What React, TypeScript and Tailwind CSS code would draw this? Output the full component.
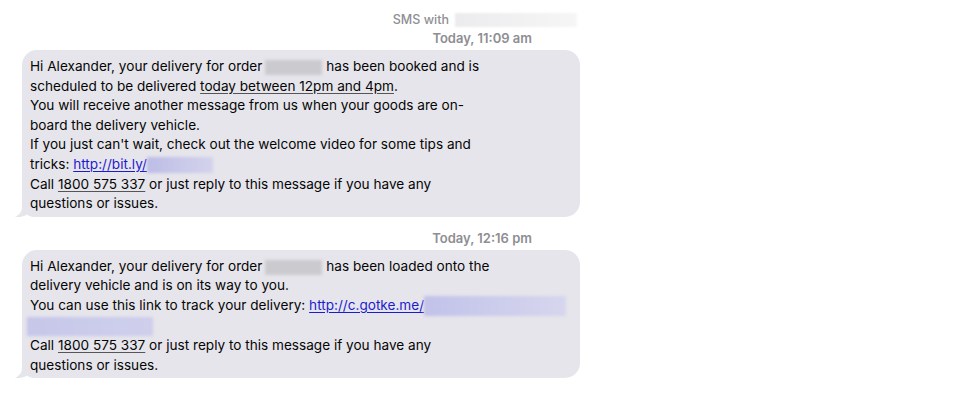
import React from "react";

const font = { fontFamily: "Inter, 'Liberation Sans', Arial, sans-serif" };

function Blur({ className }: { className: string }) {
  return <span className={`inline-block align-middle blur-[1.5px] ${className}`} />;
}

function Tail() {
  return (
    <svg
      className="absolute -left-[7px] bottom-0"
      width="24"
      height="20"
      viewBox="0 0 24 20"
    >
      <path
        d="M7 0 H24 V20 H19 C16 20 14 19 12 17.5 C9 19.5 4 20.5 0 20 C4 18 7 15 7 10 Z"
        fill="#e6e5eb"
      />
    </svg>
  );
}

function Bubble({ children }: { children: React.ReactNode }) {
  return (
    <div className="relative w-[558px] rounded-[15px] bg-[#e6e5eb] pl-[8px] pr-2 pt-[7px] pb-[3px] text-[13.6px] leading-[19.6px] text-[#050505]">
      <Tail />
      <div className="relative">{children}</div>
    </div>
  );
}

function Stamp({ children }: { children: React.ReactNode }) {
  return (
    <div className="flex w-[558px] justify-end pr-[48px] text-[13px] font-semibold leading-[18px] text-[#8e8e93]">
      {children}
    </div>
  );
}

const Link = ({ children }: { children: React.ReactNode }) => (
  <span className="text-[#1c1ccf] underline underline-offset-2">{children}</span>
);

const Detected = ({ children }: { children: React.ReactNode }) => (
  <span className="underline decoration-[#555] underline-offset-2">{children}</span>
);

export default function App() {
  return (
    <div className="h-[405px] w-[960px] bg-white pl-[22px] pt-[11px]" style={font}>
      {/* header */}
      <div className="flex w-[558px] items-center justify-end pr-[3px] text-[12.5px] font-medium leading-[18px] text-[#8e8e93]">
        <span>SMS with</span>
        <span className="ml-[6px] inline-block h-[14px] w-[122px] bg-gradient-to-r from-[#ececee] to-[#f6f6f7] blur-[1px]" />
      </div>
      <Stamp>Today, 11:09 am</Stamp>

      <div className="mt-[3px] whitespace-nowrap">
        <Bubble>
          <div>
            Hi Alexander, your delivery for order
            <Blur className="ml-[3px] h-[15px] w-[57px] bg-[#cbcbcf]" /> has been booked and is
          </div>
          <div>
            scheduled to be delivered <Detected>today between 12pm and 4pm</Detected>.
          </div>
          <div>You will receive another message from us when your goods are on-</div>
          <div>board the delivery vehicle.</div>
          <div>If you just can't wait, check out the welcome video for some tips and</div>
          <div>
            tricks: <Link>http://bit.ly/</Link>
            <Blur className="h-[16px] w-[66px] bg-gradient-to-r from-[#bdbde6] to-[#d3d3ec]" />
          </div>
          <div>
            Call <Detected>1800 575 337</Detected> or just reply to this message if you have any
          </div>
          <div>questions or issues.</div>
        </Bubble>
      </div>

      <div className="mt-[12px] mb-[3px]">
        <Stamp>Today, 12:16 pm</Stamp>
      </div>

      <div className="whitespace-nowrap">
        <Bubble>
          <div>
            Hi Alexander, your delivery for order
            <Blur className="ml-[3px] h-[15px] w-[57px] bg-[#cbcbcf]" /> has been loaded onto the
          </div>
          <div>delivery vehicle and is on its way to you.</div>
          <div>
            You can use this link to track your delivery: <Link>http://c.gotke.me/</Link>
            <Blur className="h-[20px] w-[142px] bg-gradient-to-r from-[#c2c2ea] to-[#d6d6ee]" />
          </div>
          <div className="-ml-[3px]">
            <Blur className="h-[19px] w-[126px] bg-gradient-to-r from-[#c6c6ea] to-[#cfcfec]" />
          </div>
          <div>
            Call <Detected>1800 575 337</Detected> or just reply to this message if you have any
          </div>
          <div>questions or issues.</div>
        </Bubble>
      </div>
    </div>
  );
}
